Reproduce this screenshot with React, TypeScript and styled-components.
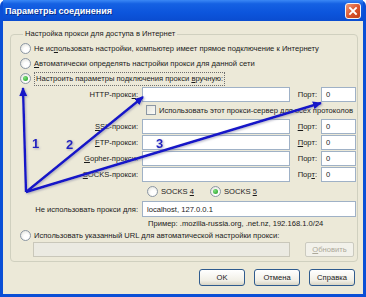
import React from "react";
import styled, { createGlobalStyle } from "styled-components";

const Global = createGlobalStyle`
  html, body { margin: 0; padding: 0; background: #fff; }
  body {
    width: 366px;
    height: 297px;
    overflow: hidden;
    font-family: "Liberation Sans", Arial, sans-serif;
    font-size: 7.6px;
    color: #1a1a1a;
  }
`;

const Window = styled.div`
  position: relative;
  width: 366px;
  height: 297px;
  box-sizing: border-box;
  display: flex;
  flex-direction: column;
  padding: 0 3px 3px;
  background: #0a4fd6;
  border-radius: 6px 6px 0 0;
`;

const TitleBar = styled.div`
  height: 21px;
  flex: none;
  display: flex;
  align-items: center;
  justify-content: space-between;
  padding: 0 2px 0 2px;
  background: linear-gradient(#3b88f5 0%, #1561e3 18%, #0c55dc 60%, #0a4cd0 100%);
`;

const Title = styled.span`
  color: #fff;
  font-weight: bold;
  font-size: 9px;
  text-shadow: 1px 1px 0 #0a2e8a;
`;

const CloseButton = styled.div`
  width: 16px;
  height: 16px;
  box-sizing: border-box;
  border: 1px solid #f4f4f4;
  border-radius: 3px;
  background: linear-gradient(135deg, #f09a7a, #d8522b 55%, #c03f18);
  display: flex;
  align-items: center;
  justify-content: center;
`;

const Body = styled.div`
  flex: 1;
  background: #ece9d8;
  padding: 8px 5px 0 7px;
  display: flex;
  flex-direction: column;
`;

const Group = styled.fieldset`
  margin: 0;
  padding: 2px 1px 4px 9px;
  border: 1px solid #d0d0bf;
  border-radius: 4px;
  min-width: 0;
`;

const Legend = styled.legend`
  padding: 0 2px;
  margin-left: 3px;
  line-height: 10px;
`;

const OptionRow = styled.div`
  height: 15px;
  display: flex;
  align-items: center;
  gap: 3px;
`;

const RadioDot = styled.span<{ $checked?: boolean }>`
  width: 11px;
  height: 11px;
  box-sizing: border-box;
  flex: none;
  border-radius: 50%;
  border: 1px solid #8c97a4;
  background: radial-gradient(circle at 60% 65%, #ffffff 30%, #dcdcd4 100%);
  display: flex;
  align-items: center;
  justify-content: center;
  &::after {
    content: "";
    display: ${(p) => (p.$checked ? "block" : "none")};
    width: 5px;
    height: 5px;
    border-radius: 50%;
    background: radial-gradient(circle at 35% 35%, #7fe07f, #1f9a1f);
  }
`;

const CheckBox = styled.span`
  width: 10px;
  height: 10px;
  box-sizing: border-box;
  flex: none;
  border: 1px solid #8c97a4;
  background: linear-gradient(135deg, #e4e3dc, #fbfbf8);
`;

const FocusText = styled.span`
  border: 1px dotted #6f6f6f;
  padding: 1px 1px;
  line-height: 10px;
`;

const Acc = styled.span`
  text-decoration: underline;
`;

const ProxyGrid = styled.div`
  margin-top: 1px;
  margin-left: 9px;
  display: grid;
  grid-template-columns: 109px 148px 23px 35px;
  grid-template-rows: 15px 14px 15px 15px 15px 15px 16px 16px 10px;
  column-gap: 4px;
  row-gap: 1.3px;
  align-items: center;
`;

const FieldLabel = styled.span`
  justify-self: end;
  white-space: nowrap;
`;

const PortLabel = styled.span`
  justify-self: end;
`;

const Input = styled.div<{ $span?: number; $disabled?: boolean }>`
  grid-column: span ${(p) => p.$span ?? 1};
  height: 15px;
  box-sizing: border-box;
  border: 1px solid ${(p) => (p.$disabled ? "#c9c7ba" : "#9fb1c6")};
  background: ${(p) => (p.$disabled ? "#ebeae2" : "#fff")};
  padding: 0 4px;
  display: flex;
  align-items: center;
  white-space: nowrap;
`;

const SpanRow = styled.div<{ $from: number; $to: number; $indent?: number }>`
  grid-column: ${(p) => p.$from} / ${(p) => p.$to};
  display: flex;
  align-items: center;
  gap: 3px;
  padding-left: ${(p) => p.$indent ?? 0}px;
  white-space: nowrap;
`;

const UrlRow = styled.div`
  display: flex;
  align-items: center;
  gap: 15px;
  margin-left: 13px;
`;

const UrlInput = styled(Input)`
  width: 257px;
`;

const DisabledButton = styled.div`
  width: 49px;
  height: 15px;
  box-sizing: border-box;
  border: 1px solid #cbcabf;
  border-radius: 2px;
  background: #f2f1ea;
  color: #aca899;
  display: flex;
  align-items: center;
  justify-content: center;
`;

const ButtonBar = styled.div`
  display: flex;
  justify-content: flex-end;
  gap: 9px;
  padding: 7px 3px 0 0;
`;

const Button = styled.div`
  width: 46px;
  height: 17px;
  box-sizing: border-box;
  border: 1px solid #2f5b8e;
  border-radius: 3px;
  background: linear-gradient(#ffffff, #f1efe6 70%, #d9d5c5);
  display: flex;
  align-items: center;
  justify-content: center;
`;

const Overlay = styled.svg`
  position: absolute;
  left: 0;
  top: 0;
  pointer-events: none;
  overflow: visible;
`;

const Example = styled.span`
  grid-column: 2 / 5;
  padding-left: 6px;
  white-space: nowrap;
`;

const Spacer = styled.span`
  width: 10px;
`;

const rows: [string, React.ReactNode, string, React.ReactNode][] = [
  ["http", <>HTTP-прокс<Acc>и</Acc>:</>, "0", <>Порт:</>],
  ["ssl", <><Acc>S</Acc>SL-прокси:</>, "0", <><Acc>П</Acc>орт:</>],
  ["ftp", <><Acc>F</Acc>TP-прокси:</>, "0", <><Acc>П</Acc>орт:</>],
  ["gopher", <><Acc>G</Acc>opher-прокси:</>, "0", <>Порт:</>],
  ["socks", <><Acc>S</Acc>OCKS-прокси:</>, "0", <>Пор<Acc>т</Acc>:</>],
];

function ProxyRow({ label, port, portLabel }: { label: React.ReactNode; port: string; portLabel: React.ReactNode }) {
  return (
    <>
      <FieldLabel>{label}</FieldLabel>
      <Input />
      <PortLabel>{portLabel}</PortLabel>
      <Input>{port}</Input>
    </>
  );
}

export default function App() {
  const [http, ...rest] = rows;
  return (
    <Window>
      <Global />
      <TitleBar>
        <Title>Параметры соединения</Title>
        <CloseButton>
          <svg width="10" height="10" viewBox="0 0 10 10">
            <path d="M2 2 L8 8 M8 2 L2 8" stroke="#fff" strokeWidth="1.8" strokeLinecap="square" />
          </svg>
        </CloseButton>
      </TitleBar>
      <Body>
        <Group>
          <Legend>Настройка прокси для доступа в Интернет</Legend>
          <OptionRow>
            <RadioDot />
            <span>Не ис<Acc>п</Acc>ользовать настройки, компьютер имеет прямое подключение к Интернету</span>
          </OptionRow>
          <OptionRow>
            <RadioDot />
            <span><Acc>А</Acc>втоматически определять настройки прокси для данной сети</span>
          </OptionRow>
          <OptionRow>
            <RadioDot $checked />
            <FocusText>Настроить параметры подключения прокси <Acc>в</Acc>ручную:</FocusText>
          </OptionRow>
          <ProxyGrid>
            <ProxyRow label={http[1]} port={http[2]} portLabel={http[3]} />
            <SpanRow $from={2} $to={5} $indent={4}>
              <CheckBox />
              <span>Использовать этот прокси-сервер для всех протоколов</span>
            </SpanRow>
            {rest.map(([key, label, port, portLabel]) => (
              <ProxyRow key={key} label={label} port={port} portLabel={portLabel} />
            ))}
            <SpanRow $from={2} $to={5} $indent={5}>
              <RadioDot />
              <span>SOCKS <Acc>4</Acc></span>
              <Spacer />
              <RadioDot $checked />
              <span>SOCKS <Acc>5</Acc></span>
            </SpanRow>
            <FieldLabel>Не использовать прокси для:</FieldLabel>
            <Input $span={3} style={{ height: 16 }}>localhost, 127.0.0.1</Input>
            <Example>Пример: .mozilla-russia.org, .net.nz, 192.168.1.0/24</Example>
          </ProxyGrid>
          <OptionRow style={{ height: 14 }}>
            <RadioDot />
            <span>Использовать указанный URL для автоматической настройки прокси:</span>
          </OptionRow>
          <UrlRow>
            <UrlInput $disabled />
            <DisabledButton><Acc>О</Acc>бновить</DisabledButton>
          </UrlRow>
        </Group>
        <ButtonBar>
          <Button>OK</Button>
          <Button>Отмена</Button>
          <Button>Справка</Button>
        </ButtonBar>
      </Body>
      <Overlay width="366" height="297" viewBox="0 0 366 297">
        <defs>
          <marker id="head" markerWidth="9" markerHeight="8" refX="8" refY="4" orient="auto" markerUnits="userSpaceOnUse">
            <path d="M0 0 L9 4 L0 8 Z" fill="#1414c8" />
          </marker>
          <filter id="glow" x="-10%" y="-10%" width="120%" height="120%">
            <feDropShadow dx="1" dy="1" stdDeviation="0.8" floodColor="#8080a0" floodOpacity="0.6" />
          </filter>
        </defs>
        <g stroke="#1414c8" strokeWidth="2.4" fill="none" markerEnd="url(#head)" filter="url(#glow)">
          <line x1="26" y1="192" x2="23" y2="88" />
          <line x1="26" y1="192" x2="143" y2="97" />
          <line x1="26" y1="192" x2="321" y2="103" />
        </g>
        <g fill="#2222c0" fontFamily="Liberation Sans, Arial, sans-serif" fontWeight="bold" fontSize="13" filter="url(#glow)">
          <text x="32" y="148">1</text>
          <text x="66" y="149">2</text>
          <text x="156" y="148">3</text>
        </g>
      </Overlay>
    </Window>
  );
}
